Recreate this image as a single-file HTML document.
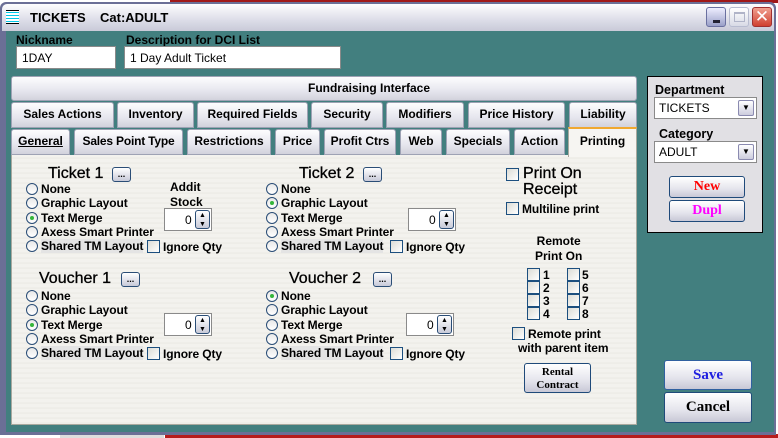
<!DOCTYPE html>
<html><head><meta charset="utf-8"><style>
*{margin:0;padding:0;box-sizing:border-box}
body{width:778px;height:438px;overflow:hidden;background:#fff;position:relative;font-family:"Liberation Sans",Arial,sans-serif;font-size:12px;font-weight:bold;color:#000}
.a{position:absolute}
.win{left:0;top:2px;width:776px;height:433px;background:#6b6f96;border-radius:6px 6px 0 0}
.title{left:2px;top:4px;width:772px;height:27px;background:linear-gradient(#fdfdfe,#dcdde8 60%,#c9cad8);border-radius:5px 5px 0 0}
.teal{left:6px;top:31px;width:768px;height:401px;background:#427f7f}
.inp{background:#fff;border:1px solid #8a8a8a;font-weight:normal;font-size:12px;padding:4px 5px}
.tab{background:linear-gradient(#fdfdfe,#e6e6ee 60%,#d2d2dc);border:1px solid #9ea2b4;border-radius:3px 3px 0 0;text-align:center;font-size:12px;line-height:22px;white-space:nowrap;overflow:hidden}
.panel{left:11px;top:155px;width:626px;height:270px;background:repeating-linear-gradient(#f3f2ee 0,#f3f2ee 2px,#ebeae5 3px,#f5f4f0 5px);border:1px solid #a9a99f;border-top:none}
.r{width:12px;height:12px;border:1px solid #2a4d76;border-radius:50%;background:linear-gradient(#e8e8e8,#fff)}
.r.on::after{content:"";position:absolute;left:3px;top:3px;width:4px;height:4px;border-radius:50%;background:#34b53a}
.cb{width:13px;height:13px;border:1px solid #1c4f7f;background:linear-gradient(135deg,#dcdcd6,#fff)}
.lbl{font-size:12px;line-height:14px;white-space:nowrap;letter-spacing:-0.1px}
.big{font-size:16px;font-weight:normal;-webkit-text-stroke:0.3px #000}
.dots{width:19px;height:15px;border:1px solid #2a4d76;border-radius:3px;background:linear-gradient(#fff,#c8cad8);font-size:9px;text-align:center;line-height:12px}
.spin{width:48px;height:23px;background:#fff;border:1px solid #8a8a8a;font-weight:normal;font-size:12px}
.btn{border:1px solid #1f4a7a;border-radius:3px;background:linear-gradient(#fff,#e4e4ec 60%,#c8c8d6);text-align:center;font-family:"Liberation Serif",serif;font-weight:bold}
.sel{background:#fff;border:1px solid #8a8a8a;font-weight:normal;font-size:12px;padding:3px 4px;height:22px}
.dd{position:absolute;right:2px;top:2px;width:16px;height:16px;border:1px solid #8a8ab0;border-radius:2px;background:linear-gradient(#fff,#ccd);font-size:8px;text-align:center;line-height:14px}
</style></head><body>
<div class="a" style="left:170px;top:0;width:608px;height:3px;background:#a01818"></div>
<div class="a" style="left:0;top:434px;width:60px;height:4px;background:#fff"></div>
<div class="a" style="left:60px;top:434px;width:104px;height:4px;background:#ddd"></div>
<div class="a" style="left:165px;top:434px;width:613px;height:4px;background:#b71c1c"></div>
<div class="a win"></div>
<div class="a title"></div>
<div class="a" style="left:6px;top:10px;width:13px;height:14px;background:repeating-linear-gradient(#fff 0,#fff 1px,#00c8e8 1px,#00c8e8 2px,#fff 2px,#fff 3px);border-bottom:1px solid #000;border-top:1px solid #000"></div>
<div class="a" style="left:30px;top:10px;font-size:13px">TICKETS</div>
<div class="a" style="left:100px;top:10px;font-size:13px">Cat:ADULT</div>
<div class="a" style="left:706px;top:7px;width:20px;height:20px;border-radius:3px;background:linear-gradient(#eef,#9aa0c8);border:1px solid #6a70a0"><div class="a" style="left:6px;top:12px;width:7px;height:3px;background:#223"></div></div>
<div class="a" style="left:729px;top:7px;width:20px;height:20px;border-radius:3px;background:linear-gradient(#fff,#d8dae6);border:1px solid #b8bcd0"><div class="a" style="left:4px;top:4px;width:11px;height:10px;border:1px solid #b0b4c8;border-top-width:2px"></div></div>
<div class="a" style="left:752px;top:7px;width:20px;height:20px;border-radius:3px;background:linear-gradient(#f0a090,#d04030);border:1px solid #a03030;color:#fff;font-size:17px;line-height:18px;text-align:center;font-weight:normal">✕</div>
<div class="a teal"></div>

<div class="a" style="left:16px;top:33px;font-size:12px">Nickname</div>
<div class="a inp" style="left:16px;top:46px;width:100px;height:23px">1DAY</div>
<div class="a" style="left:126px;top:33px;font-size:12px">Description for DCI List</div>
<div class="a inp" style="left:124px;top:46px;width:217px;height:23px">1 Day Adult Ticket</div>

<div class="a tab" style="left:11px;top:76px;width:626px;height:25px;border-radius:3px;padding-left:90px">Fundraising Interface</div>
<div class="a tab" style="left:11px;top:102px;width:103px;height:26px">Sales Actions</div>
<div class="a tab" style="left:117px;top:102px;width:77px;height:26px">Inventory</div>
<div class="a tab" style="left:197px;top:102px;width:111px;height:26px">Required Fields</div>
<div class="a tab" style="left:311px;top:102px;width:72px;height:26px">Security</div>
<div class="a tab" style="left:386px;top:102px;width:78px;height:26px">Modifiers</div>
<div class="a tab" style="left:468px;top:102px;width:97px;height:26px">Price History</div>
<div class="a tab" style="left:569px;top:102px;width:68px;height:26px">Liability</div>
<div class="a tab" style="left:11px;top:129px;width:59px;height:26px;text-decoration:underline">General</div>
<div class="a tab" style="left:74px;top:129px;width:109px;height:26px;letter-spacing:-0.2px">Sales Point Type</div>
<div class="a tab" style="left:187px;top:129px;width:84px;height:26px">Restrictions</div>
<div class="a tab" style="left:275px;top:129px;width:45px;height:26px">Price</div>
<div class="a tab" style="left:324px;top:129px;width:72px;height:26px">Profit Ctrs</div>
<div class="a tab" style="left:400px;top:129px;width:42px;height:26px">Web</div>
<div class="a tab" style="left:446px;top:129px;width:64px;height:26px">Specials</div>
<div class="a tab" style="left:514px;top:129px;width:51px;height:26px">Action</div>
<div class="a panel"></div>
<div class="a" style="left:568px;top:127px;width:69px;height:30px;background:#f6f5f2;border:1px solid #a9a99f;border-top:2px solid #f0a830;border-bottom:none;text-align:center;line-height:24px;font-size:12px">Printing</div>

<!-- Ticket 1 -->
<div class="a big" style="left:48px;top:165px">Ticket 1</div><div class="a dots" style="left:112px;top:167px">...</div>
<div class="a" style="left:170px;top:180px;line-height:15px">Addit<br>Stock</div>
<div class="a r" style="left:26px;top:183px"></div><div class="a lbl" style="left:41px;top:182px">None</div>
<div class="a r" style="left:26px;top:197px"></div><div class="a lbl" style="left:41px;top:196px">Graphic Layout</div>
<div class="a r on" style="left:26px;top:212px"></div><div class="a lbl" style="left:41px;top:211px">Text Merge</div>
<div class="a r" style="left:26px;top:226px"></div><div class="a lbl" style="left:41px;top:225px">Axess Smart Printer</div>
<div class="a r" style="left:26px;top:240px"></div><div class="a lbl" style="left:41px;top:239px;background:#e4e4e4">Shared TM Layout</div>
<div class="a cb" style="left:147px;top:240px"></div><div class="a lbl" style="left:163px;top:240px">Ignore Qty</div>
<div class="a spin" style="left:164px;top:208px"><span class="a" style="left:20px;top:4px">0</span><div class="a dots" style="left:30px;top:1px;width:15px;height:19px;font-size:7px;line-height:9px">▲<br>▼</div></div>

<!-- Ticket 2 -->
<div class="a big" style="left:299px;top:165px">Ticket 2</div><div class="a dots" style="left:363px;top:167px">...</div>
<div class="a r" style="left:266px;top:183px"></div><div class="a lbl" style="left:281px;top:182px">None</div>
<div class="a r on" style="left:266px;top:197px"></div><div class="a lbl" style="left:281px;top:196px">Graphic Layout</div>
<div class="a r" style="left:266px;top:212px"></div><div class="a lbl" style="left:281px;top:211px">Text Merge</div>
<div class="a r" style="left:266px;top:226px"></div><div class="a lbl" style="left:281px;top:225px">Axess Smart Printer</div>
<div class="a r" style="left:266px;top:240px"></div><div class="a lbl" style="left:281px;top:239px;background:#e4e4e4">Shared TM Layout</div>
<div class="a cb" style="left:390px;top:240px"></div><div class="a lbl" style="left:406px;top:240px">Ignore Qty</div>
<div class="a spin" style="left:408px;top:208px"><span class="a" style="left:20px;top:4px">0</span><div class="a dots" style="left:30px;top:1px;width:15px;height:19px;font-size:7px;line-height:9px">▲<br>▼</div></div>

<!-- Voucher 1 -->
<div class="a big" style="left:39px;top:270px">Voucher 1</div><div class="a dots" style="left:121px;top:272px">...</div>
<div class="a r" style="left:26px;top:290px"></div><div class="a lbl" style="left:41px;top:289px">None</div>
<div class="a r" style="left:26px;top:304px"></div><div class="a lbl" style="left:41px;top:303px">Graphic Layout</div>
<div class="a r on" style="left:26px;top:319px"></div><div class="a lbl" style="left:41px;top:318px">Text Merge</div>
<div class="a r" style="left:26px;top:333px"></div><div class="a lbl" style="left:41px;top:332px">Axess Smart Printer</div>
<div class="a r" style="left:26px;top:347px"></div><div class="a lbl" style="left:41px;top:346px;background:#e4e4e4">Shared TM Layout</div>
<div class="a cb" style="left:147px;top:347px"></div><div class="a lbl" style="left:163px;top:347px">Ignore Qty</div>
<div class="a spin" style="left:164px;top:313px"><span class="a" style="left:20px;top:4px">0</span><div class="a dots" style="left:30px;top:1px;width:15px;height:19px;font-size:7px;line-height:9px">▲<br>▼</div></div>

<!-- Voucher 2 -->
<div class="a big" style="left:289px;top:270px">Voucher 2</div><div class="a dots" style="left:373px;top:272px">...</div>
<div class="a r on" style="left:266px;top:290px"></div><div class="a lbl" style="left:281px;top:289px">None</div>
<div class="a r" style="left:266px;top:304px"></div><div class="a lbl" style="left:281px;top:303px">Graphic Layout</div>
<div class="a r" style="left:266px;top:319px"></div><div class="a lbl" style="left:281px;top:318px">Text Merge</div>
<div class="a r" style="left:266px;top:333px"></div><div class="a lbl" style="left:281px;top:332px">Axess Smart Printer</div>
<div class="a r" style="left:266px;top:347px"></div><div class="a lbl" style="left:281px;top:346px;background:#e4e4e4">Shared TM Layout</div>
<div class="a cb" style="left:390px;top:347px"></div><div class="a lbl" style="left:406px;top:347px">Ignore Qty</div>
<div class="a spin" style="left:406px;top:313px"><span class="a" style="left:20px;top:4px">0</span><div class="a dots" style="left:30px;top:1px;width:15px;height:19px;font-size:7px;line-height:9px">▲<br>▼</div></div>

<!-- right column -->
<div class="a cb" style="left:506px;top:168px"></div>
<div class="a big" style="left:523px;top:166px;line-height:16px">Print On<br>Receipt</div>
<div class="a cb" style="left:506px;top:202px"></div><div class="a lbl" style="left:522px;top:202px">Multiline print</div>
<div class="a" style="left:535px;top:234px;line-height:15px;text-align:center">Remote<br>Print On</div>
<div class="a cb" style="left:527px;top:268px"></div><div class="a lbl" style="left:543px;top:268px">1</div>
<div class="a cb" style="left:527px;top:281px"></div><div class="a lbl" style="left:543px;top:281px">2</div>
<div class="a cb" style="left:527px;top:294px"></div><div class="a lbl" style="left:543px;top:294px">3</div>
<div class="a cb" style="left:527px;top:307px"></div><div class="a lbl" style="left:543px;top:307px">4</div>
<div class="a cb" style="left:567px;top:268px"></div><div class="a lbl" style="left:582px;top:268px">5</div>
<div class="a cb" style="left:567px;top:281px"></div><div class="a lbl" style="left:582px;top:281px">6</div>
<div class="a cb" style="left:567px;top:294px"></div><div class="a lbl" style="left:582px;top:294px">7</div>
<div class="a cb" style="left:567px;top:307px"></div><div class="a lbl" style="left:582px;top:307px">8</div>
<div class="a cb" style="left:512px;top:327px"></div><div class="a lbl" style="left:528px;top:327px">Remote print</div>
<div class="a lbl" style="left:518px;top:341px">with parent item</div>
<div class="a btn" style="left:524px;top:363px;width:67px;height:30px;font-size:11px;line-height:13px;padding-top:2px">Rental<br>Contract</div>

<!-- right panel -->
<div class="a" style="left:647px;top:76px;width:116px;height:157px;background:#e1e0e4;border:1px solid #000"></div>
<div class="a" style="left:655px;top:83px;font-size:12.5px">Department</div>
<div class="a sel" style="left:654px;top:97px;width:103px">TICKETS<div class="dd">▼</div></div>
<div class="a" style="left:659px;top:127px;font-size:12.5px">Category</div>
<div class="a sel" style="left:654px;top:141px;width:103px">ADULT<div class="dd">▼</div></div>
<div class="a btn" style="left:669px;top:176px;width:76px;height:22px;color:#f00;font-size:14px;line-height:20px">New</div>
<div class="a btn" style="left:669px;top:200px;width:76px;height:22px;color:#f0f;font-size:14px;line-height:20px">Dupl</div>
<div class="a btn" style="left:664px;top:360px;width:88px;height:30px;color:#1e1ee0;font-size:15px;line-height:28px;border-color:#3060a0">Save</div>
<div class="a btn" style="left:664px;top:392px;width:88px;height:31px;color:#000;font-size:15px;line-height:29px">Cancel</div>
</body></html>
